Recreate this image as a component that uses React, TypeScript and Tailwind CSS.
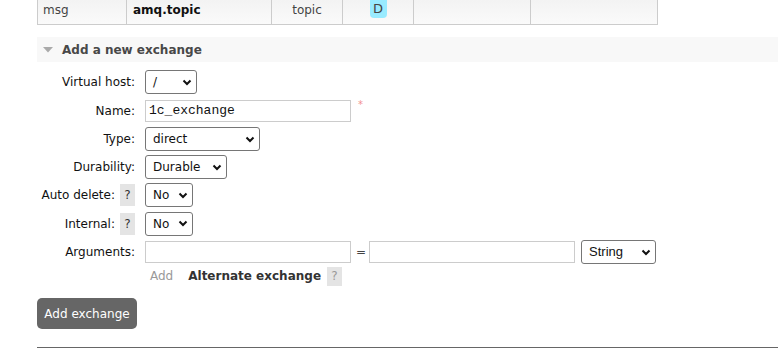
import React from "react";

const verdana = "font-['DejaVu_Sans',Verdana,sans-serif]";

function Chevron() {
  return (
    <svg width="10" height="7" viewBox="0 0 10 7" className="shrink-0">
      <polyline points="1.5,1.5 5,5 8.5,1.5" fill="none" stroke="#111" strokeWidth="2" />
    </svg>
  );
}

function FakeSelect({ value, width, arial }: { value: string; width: number; arial?: boolean }) {
  return (
    <div
      className={`flex h-[24px] items-center justify-between rounded-[3px] border border-[#767676] bg-white pl-[7px] pr-[4px] text-[#111] ${
        arial ? "font-['Liberation_Sans',Arial,sans-serif] text-[13px]" : "text-[12px]"
      }`}
      style={{ width }}
    >
      <span>{value}</span>
      <Chevron />
    </div>
  );
}

function TextInput({ value }: { value?: string }) {
  return (
    <div className="flex h-[22px] w-[206px] items-center border border-[#cccccc] bg-white pl-[3px] font-['Liberation_Mono','Courier_New',monospace] text-[13px] text-[#111]">
      {value}
    </div>
  );
}

function Help({ tall }: { tall?: boolean }) {
  return (
    <span
      className={`inline-flex w-[15px] items-center justify-center bg-[#e4e4e4] text-[12px] ${
        tall ? "h-[22px] text-[#333]" : "h-[19px] text-[#999]"
      }`}
    >
      ?
    </span>
  );
}

function Row({
  label,
  help,
  className,
  children,
}: {
  label: string;
  help?: boolean;
  className?: string;
  children: React.ReactNode;
}) {
  return (
    <div className={`flex h-[28px] items-center ${className ?? ""}`}>
      <div className="flex w-[98px] items-center justify-end gap-[5px] text-[12px] text-[#111]">
        <span>{label}</span>
        {help && <Help tall />}
      </div>
      <div className="ml-[10px] flex items-center">{children}</div>
    </div>
  );
}

export default function App() {
  return (
    <div className={`${verdana} min-h-[353px] w-full overflow-hidden bg-white pl-[37px] text-[12px]`}>
      {/* exchange table, last row */}
      <div className="flex h-[25px] w-[621px] border-x border-b border-[#cccccc] bg-gradient-to-b from-[#f3f3f3] to-[#fafafa] text-[12px]">
        <div className="w-[89px] border-r border-[#cccccc] pl-[5px] pt-[1px] text-[#444]">msg</div>
        <div className="w-[145px] border-r border-[#cccccc] pl-[6px] pt-[1px] font-bold text-[#111]">amq.topic</div>
        <div className="w-[71px] border-r border-[#cccccc] pt-[1px] text-center text-[#444]">topic</div>
        <div className="flex w-[71px] justify-center border-r border-[#cccccc]">
          <span className="-mt-[3px] flex h-[21px] w-[17px] items-center justify-center rounded-[4px] bg-[#99ebff] pt-[3px] text-[13px] text-[#444]">
            D
          </span>
        </div>
        <div className="w-[117px] border-r border-[#cccccc]" />
        <div className="flex-1" />
      </div>

      {/* section header */}
      <div className="mt-[12px] flex h-[25px] items-center bg-[#f8f8f8] pl-[6px]">
        <svg width="10" height="6" viewBox="0 0 10 6" className="mt-[1px]">
          <polygon points="0,0 10,0 5,5.5" fill="#aaaaaa" />
        </svg>
        <span className="ml-[9px] text-[12px] font-bold text-[#484848]">Add a new exchange</span>
      </div>

      {/* form */}
      <div className="mt-[6px] flex flex-col">
        <Row label="Virtual host:">
          <FakeSelect value="/" width={52} />
        </Row>
        <Row label="Name:" className="h-[29px]">
          <TextInput value="1c_exchange" />
          <span className="ml-[7px] -mt-[12px] text-[10px] text-[#f29090]">*</span>
        </Row>
        <Row label="Type:">
          <FakeSelect value="direct" width={115} />
        </Row>
        <Row label="Durability:">
          <FakeSelect value="Durable" width={82} />
        </Row>
        <Row label="Auto delete:" help>
          <FakeSelect value="No" width={48} />
        </Row>
        <Row label="Internal:" help className="h-[29px]">
          <FakeSelect value="No" width={48} />
        </Row>
        <Row label="Arguments:">
          <TextInput />
          <span className="ml-[5px] mr-[3px] text-[12px] text-[#444]">=</span>
          <TextInput />
          <div className="ml-[6px]">
            <FakeSelect value="String" width={75} arial />
          </div>
        </Row>
        <div className="flex h-[20px] items-center pl-[113px]">
          <span className="text-[12px] text-[#999]">Add</span>
          <span className="ml-[15px] text-[12px] font-bold text-[#333]">Alternate exchange</span>
          <span className="ml-[6px]">
            <Help />
          </span>
        </div>
      </div>

      <button className="mt-[12px] flex h-[31px] w-[100px] items-center justify-center rounded-[5px] bg-[#666666] text-[12px] text-white">
        Add exchange
      </button>

      <div className="mt-[18px] h-px bg-[#666666]" />
    </div>
  );
}
